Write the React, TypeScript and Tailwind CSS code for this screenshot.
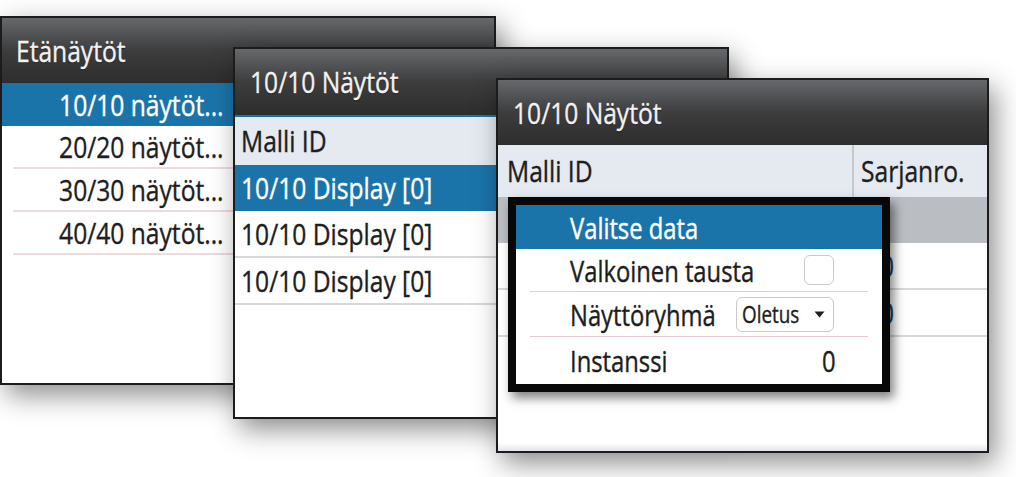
import React from "react";

const TITLE =
  "bg-linear-to-b from-[#66696c] via-[#3d3d3d] to-[#2d2d2d] text-[#f2f2f2] flex items-center [text-shadow:0_1px_1px_rgba(0,0,0,0.6)]";
const BLUE = "bg-[#1b74a9] text-white";

// narrow text, the device font is a condensed sans
function T({ children, right }: { children: React.ReactNode; right?: boolean }) {
  return (
    <span
      className={
        right
          ? "inline-block whitespace-nowrap scale-x-[0.82] origin-right"
          : "inline-block whitespace-nowrap scale-x-[0.82] origin-left"
      }
    >
      {children}
    </span>
  );
}

function RemoteList() {
  const items = ["20/20 näytöt...", "30/30 näytöt...", "40/40 näytöt..."];
  return (
    <div className="absolute left-0 top-[16px] w-[496px] h-[369px] z-10 border-2 border-[#1c1c1c] bg-white shadow-[6px_10px_26px_rgba(0,0,0,0.45)] flex flex-col">
      <div className={`${TITLE} h-[65px] pl-[14px]`}>
        <T>Etänäytöt</T>
      </div>
      <div className={`${BLUE} h-[43px] flex items-center`}>
        <div className="w-[222px] text-right">
          <T right>10/10 näytöt...</T>
        </div>
      </div>
      {items.map((it) => (
        <div
          key={it}
          className="ml-[11px] w-[240px] h-[43px] border-b-2 border-[#efdadd] flex items-center justify-end pr-[29px]"
        >
          <T right>{it}</T>
        </div>
      ))}
    </div>
  );
}

function DisplayList() {
  return (
    <div className="absolute left-[233px] top-[47px] w-[496px] h-[372px] z-20 border-2 border-[#1c1c1c] bg-white shadow-[6px_10px_26px_rgba(0,0,0,0.45)] flex flex-col">
      <div className={`${TITLE} h-[68px] pl-[15px] border-b-2 border-[#1b74a9]`}>
        <T>10/10 Näytöt</T>
      </div>
      <div className="h-[48px] bg-[#e4eaf0] flex items-center pl-[6px] text-[#1e1e1e]">
        <T>Malli ID</T>
      </div>
      <div className={`${BLUE} h-[46px] flex items-center pl-[6px]`}>
        <T>10/10 Display [0]</T>
      </div>
      {[0, 1].map((i) => (
        <div
          key={i}
          className="h-[47px] border-b-2 border-[#d5d9dd] flex items-center pl-[6px] text-[#1e1e1e]"
        >
          <T>10/10 Display [0]</T>
        </div>
      ))}
    </div>
  );
}

function DetailList() {
  return (
    <div className="absolute left-[496px] top-[78px] w-[493px] h-[375px] z-30 border-2 border-[#1c1c1c] bg-white shadow-[6px_10px_26px_rgba(0,0,0,0.45)] flex flex-col">
      <div className={`${TITLE} h-[65px] pl-[15px]`}>
        <T>10/10 Näytöt</T>
      </div>
      <div className="h-[52px] bg-[#e4eaf0] flex text-[#1e1e1e]">
        <div className="w-[363px] border-r-2 border-[#c5c9cd] flex items-center pl-[9px]">
          <T>Malli ID</T>
        </div>
        <div className="flex-1 flex items-center pl-[7px]">
          <T>Sarjanro.</T>
        </div>
      </div>
      <div className="h-[46px] bg-[#babec2]" />
      {[0, 1].map((i) => (
        <div key={i} className="h-[47px] border-b-2 border-[#d5d9dd] flex text-[#1e1e1e]">
          <div className="w-[363px] flex items-center pl-[9px]">
            <T>10/10 Display [0]</T>
          </div>
          <div className="flex-1 flex items-center pl-[19px] text-[#1b3f66]">
            <T>0</T>
          </div>
        </div>
      ))}
      <div className="flex-1" />
      <div className="h-[8px] bg-linear-to-b from-white to-[#e2e6ea]" />
    </div>
  );
}

function Popup() {
  return (
    <div className="absolute left-[508px] top-[197px] w-[382px] h-[195px] z-40 border-[8px] border-[#080808] bg-white shadow-[4px_6px_10px_rgba(0,0,0,0.5)] flex flex-col text-[29px] text-[#1e1e1e]">
      <div className={`${BLUE} h-[44px] flex items-center pl-[54px]`}>
        <T>Valitse data</T>
      </div>
      <div className="mx-[14px] h-[43px] border-b border-[#e9c9ce] flex items-center pl-[40px] pr-[34px]">
        <div className="min-w-0 flex-1">
          <T>Valkoinen tausta</T>
        </div>
        <div className="shrink-0 w-[30px] h-[30px] rounded-[6px] border border-[#c9c9c9] bg-white" />
      </div>
      <div className="mx-[14px] h-[45px] border-b border-[#e9c9ce] flex items-center pl-[40px] pr-[34px]">
        <div className="min-w-0 flex-1">
          <T>Näyttöryhmä</T>
        </div>
        <div className="shrink-0 w-[98px] h-[35px] rounded-[6px] border border-[#c9c9c9] flex items-center pl-[5px] pr-[8px] text-[23px]">
          <div className="min-w-0 flex-1">
            <T>Oletus</T>
          </div>
          <svg className="shrink-0" width="11" height="7" viewBox="0 0 11 7">
            <path d="M0.5 0.5 L10.5 0.5 L5.5 6.5 Z" fill="#1e1e1e" />
          </svg>
        </div>
      </div>
      <div className="mx-[14px] flex-1 flex items-center pl-[40px] pr-[32px]">
        <div className="min-w-0 flex-1">
          <T>Instanssi</T>
        </div>
        <T right>0</T>
      </div>
    </div>
  );
}

export default function App() {
  return (
    <div className="relative w-[1016px] h-[477px] bg-white overflow-hidden font-['Open_Sans',sans-serif] text-[30px] leading-none text-[#1e1e1e] [-webkit-text-stroke:0.4px_currentColor]">
      <RemoteList />
      <DisplayList />
      <DetailList />
      <Popup />
    </div>
  );
}
